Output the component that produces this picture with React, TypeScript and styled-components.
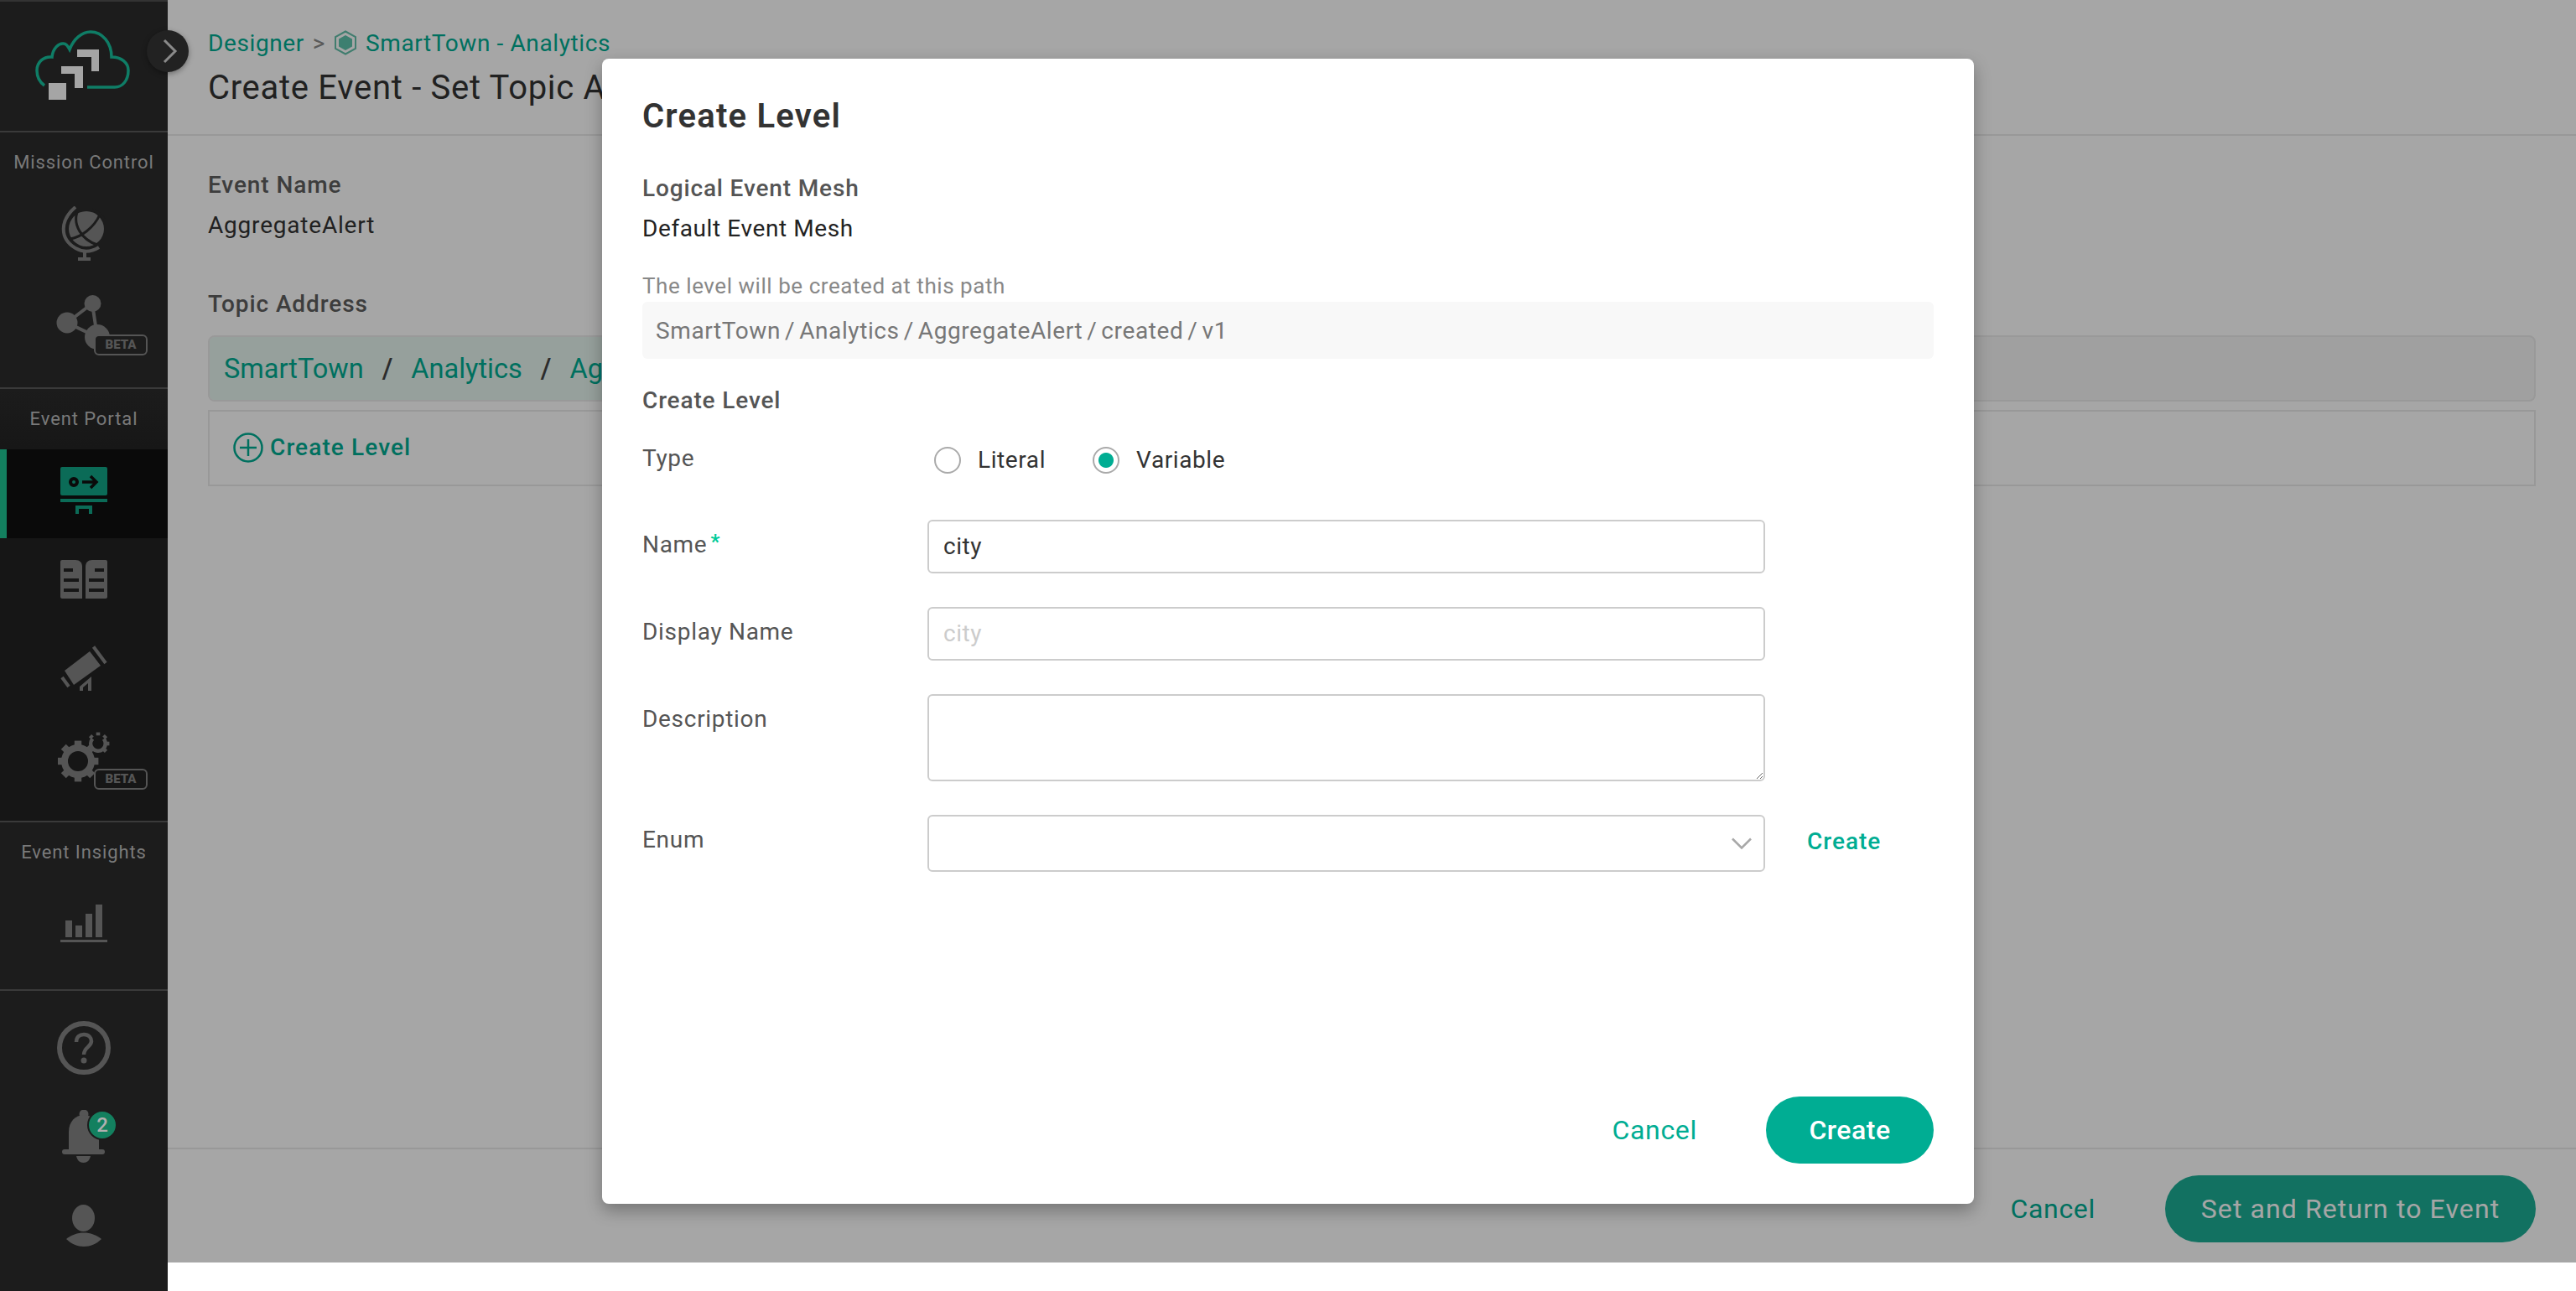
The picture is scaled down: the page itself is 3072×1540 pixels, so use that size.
import React from "react";
import styled, { createGlobalStyle } from "styled-components";

const FONT = `Roboto, "Liberation Sans", sans-serif`;

const GlobalStyle = createGlobalStyle`
  html, body {
    margin: 0;
    padding: 0;
    background: #fff;
    font-family: ${FONT};
  }
  * { box-sizing: border-box; }
`;

function Gear(props: { cx: number; cy: number; r: number; teeth: number[]; ring: number; open?: boolean }) {
  const { cx, cy, r, teeth, ring, open } = props;
  const toothW = r * 0.42;
  const mid = r - ring / 2;
  const circ = 2 * Math.PI * mid;
  return (
    <g>
      <circle
        cx={cx}
        cy={cy}
        r={mid}
        fill="none"
        stroke="#555"
        strokeWidth={ring}
        strokeDasharray={open ? `${circ * 0.72} ${circ}` : undefined}
        transform={open ? `rotate(-40 ${cx} ${cy})` : undefined}
      />
      {teeth.map((a) => (
        <rect
          key={a}
          x={cx - toothW / 2}
          y={cy - r - r * 0.22}
          width={toothW}
          height={r * 0.34}
          fill="#555"
          transform={`rotate(${a} ${cx} ${cy})`}
        />
      ))}
    </g>
  );
}

function Logo() {
  return (
    <svg width="120" height="90" viewBox="40 38 120 90">
      <path
        d="M53 106C46 101 44 95 44 88C44 78 52 71 62 72C63 62 70 55 76 56C79 56 81 59 83 63C88 50 98 42 108 42C122 42 133 55 133 72C145 72 153 79 153 88C153 100 146 108 137 108H104"
        fill="none"
        stroke="#0f7d66"
        strokeWidth="3.5"
      />
      <rect x="58" y="103" width="21" height="20" fill="#a5a5a5" />
      <path d="M73 83H99V109H89V92H73Z" fill="#a5a5a5" />
      <path d="M92 63H118V89H109V72H92Z" fill="#a5a5a5" />
    </svg>
  );
}

function GlobeIcon() {
  return (
    <svg width="56" height="66" viewBox="72 246 56 66">
      <circle cx="103" cy="273" r="21" fill="#555" />
      <path d="M92 253C87 268 97 286 116 292" fill="none" stroke="#1c1c1c" strokeWidth="3" />
      <path d="M84 285C96 283 112 272 119 256" fill="none" stroke="#1c1c1c" strokeWidth="3" />
      <path d="M110 250C116 252 120 255 124 261" fill="none" stroke="#1c1c1c" strokeWidth="3" />
      <path d="M90 247C72 262 70 284 90 296C100 302 110 300 118 295" fill="none" stroke="#555" strokeWidth="4" />
      <path d="M101 298V308M93 309H108" fill="none" stroke="#555" strokeWidth="4" />
    </svg>
  );
}

function GraphIcon() {
  return (
    <svg width="72" height="70" viewBox="64 350 72 70">
      <path d="M110 362L80 385L116 402L110 362" fill="none" stroke="#555" strokeWidth="4" />
      <circle cx="110.5" cy="362" r="10" fill="#555" />
      <circle cx="80" cy="385" r="12.5" fill="#555" />
      <circle cx="116" cy="402" r="15" fill="#555" />
    </svg>
  );
}

function DesignerIcon() {
  return (
    <svg width="56" height="56" viewBox="72 556 56 56">
      <rect x="72" y="556" width="56" height="34" rx="2" fill="#0b6b57" />
      <circle cx="88" cy="574" r="4" fill="none" stroke="#0a0a0a" strokeWidth="4" />
      <path d="M98 574H114M108 567L115 574L108 581" fill="none" stroke="#0a0a0a" strokeWidth="3.5" />
      <rect x="72" y="594" width="56" height="4" fill="#0b6b57" />
      <path d="M92 612V604H108V612" fill="none" stroke="#0b6b57" strokeWidth="4" />
    </svg>
  );
}

function BookIcon() {
  return (
    <svg width="56" height="46" viewBox="72 668 56 46">
      <path d="M72 670A2 2 0 0 1 74 668H90C95 668 98 671 98 676V714H74A2 2 0 0 1 72 712Z" fill="#555" />
      <path d="M128 670A2 2 0 0 0 126 668H110C105 668 102 671 102 676V714H126A2 2 0 0 0 128 712Z" fill="#555" />
      <path d="M76 680H87M76 692H94M76 704H94M113 680H124M106 692H124M106 704H124" stroke="#161616" strokeWidth="4" />
    </svg>
  );
}

function TelescopeIcon() {
  return (
    <svg width="56" height="54" viewBox="72 768 56 54">
      <path d="M77 798L107 775L120 792L88 815Z" fill="#555" />
      <path d="M111.500 769.500L126 789M74 806L82 817" stroke="#555" strokeWidth="4" />
      <path d="M95 822V817L109 805V822H105V813L99 818V822Z" fill="#555" />
    </svg>
  );
}

function GearsIcon() {
  return (
    <svg width="62" height="62" viewBox="69 872 62 62">
      <Gear cx={93} cy={908} r={20} ring={8} teeth={[0, 45, 90, 135, 180, 225, 270, 315]} />
      <Gear cx={117} cy={887} r={11} ring={4.500} open teeth={[-45, 0, 45, 90, 135]} />
    </svg>
  );
}

function ChartIcon() {
  return (
    <svg width="56" height="46" viewBox="72 1081 56 46">
      <path d="M78 1100H86V1120H78ZM90 1106H98V1120H90ZM102 1092H110V1120H102ZM114 1081H122V1120H114ZM72 1123H128V1126H72Z" fill="#555" />
    </svg>
  );
}

function HelpIcon() {
  return (
    <svg width="64" height="64" viewBox="0 0 64 64">
      <circle cx="32" cy="32" r="29" fill="none" stroke="#555" strokeWidth="6" />
      <path d="M23 25C23 19 27 16 32 16C38 16 41 20 41 24C41 31 32 31 32 40" fill="none" stroke="#555" strokeWidth="4.500" />
      <circle cx="32" cy="47" r="3.500" fill="#555" />
    </svg>
  );
}

function BellIcon() {
  return (
    <svg width="52" height="64" viewBox="73 1324 52 64">
      <circle cx="99" cy="1329" r="5.500" fill="#555" />
      <path d="M81 1372V1350C81 1338 89 1330 99 1330C109 1330 117 1338 117 1350V1372Z" fill="#555" />
      <rect x="73" y="1371" width="51" height="6" rx="3" fill="#555" />
      <path d="M90 1379H107C106 1384 103 1387 98.500 1387C94 1387 91 1384 90 1379Z" fill="#555" />
    </svg>
  );
}

function UserIcon() {
  return (
    <svg width="42" height="50" viewBox="79 1437 42 50">
      <ellipse cx="99.500" cy="1453" rx="13.500" ry="16" fill="#555" />
      <path d="M79 1478C91 1468 109 1468 121 1478C109 1490 91 1490 79 1478Z" fill="#555" />
    </svg>
  );
}

function PlusIcon() {
  return (
    <svg width="36" height="36" viewBox="0 0 36 36">
      <circle cx="18" cy="18" r="16.500" fill="none" stroke="#00ad93" strokeWidth="2.500" />
      <path d="M18 8V28M8 18H28" stroke="#00ad93" strokeWidth="2.500" />
    </svg>
  );
}

export default function App() {
  return (
    <Shell>
      <GlobalStyle />
      <Sidebar>
        <LogoBox>
          <Logo />
        </LogoBox>
        <Section>
          <SectionTitle>Mission Control</SectionTitle>
          <NavItem>
            <GlobeIcon />
          </NavItem>
          <NavItem>
            <GraphIcon />
            <Beta $top={63} $bg="#1c1c1c">BETA</Beta>
          </NavItem>
        </Section>
        <Section $dark>
          <SectionTitle>Event Portal</SectionTitle>
          <NavItem $active>
            <DesignerIcon />
          </NavItem>
          <NavItem>
            <BookIcon />
          </NavItem>
          <NavItem>
            <TelescopeIcon />
          </NavItem>
          <NavItem>
            <GearsIcon />
            <Beta $top={63} $bg="#161616">BETA</Beta>
          </NavItem>
        </Section>
        <Section>
          <SectionTitle>Event Insights</SectionTitle>
          <NavItem>
            <ChartIcon />
          </NavItem>
        </Section>
        <BottomSection>
          <BottomItem>
            <HelpIcon />
          </BottomItem>
          <BottomItem>
            <BellIcon />
            <Count>2</Count>
          </BottomItem>
          <BottomItem>
            <UserIcon />
          </BottomItem>
        </BottomSection>
        <Collapse>
          <svg width="18" height="30" viewBox="0 0 18 30">
            <path d="M2 2L15 15L2 28" fill="none" stroke="#8a8a8a" strokeWidth="3" />
          </svg>
        </Collapse>
      </Sidebar>

      <Main>
        <Header>
          <Breadcrumb>
            <a>Designer</a>
            <Crumb>&gt;</Crumb>
            <svg width="28" height="30" viewBox="0 0 28 30">
              <path d="M14 1.500L26 8V22L14 28.500L2 22V8Z" fill="none" stroke="#63c0aa" strokeWidth="2" />
              <path d="M14 6L22 10.500V19.500L14 24L6 19.500V10.500Z" fill="#5fc4ad" />
            </svg>
            <a>SmartTown - Analytics</a>
          </Breadcrumb>
          <PageTitle>Create Event - Set Topic Address</PageTitle>
        </Header>
        <Content>
          <FieldTitle>Event Name</FieldTitle>
          <FieldValue>AggregateAlert</FieldValue>
          <TopicTitle>Topic Address</TopicTitle>
          <TopicBar>
            <TopicChips>
              <span>SmartTown</span>
              <i>/</i>
              <span>Analytics</span>
              <i>/</i>
              <span>AggregateAlert</span>
            </TopicChips>
          </TopicBar>
          <LevelBox>
            <PlusIcon />
            <span>Create Level</span>
          </LevelBox>
        </Content>
        <PageFooter>
          <PageCancel>Cancel</PageCancel>
          <PageButton>Set and Return to Event</PageButton>
        </PageFooter>
      </Main>

      <Scrim>
        <Modal>
          <ModalTitle>Create Level</ModalTitle>
          <BoldLabel>Logical Event Mesh</BoldLabel>
          <PlainValue>Default Event Mesh</PlainValue>
          <Hint>The level will be created at this path</Hint>
          <PathBox>
            SmartTown<b>/</b>Analytics<b>/</b>AggregateAlert<b>/</b>created<b>/</b>v1
          </PathBox>
          <SubTitle>Create Level</SubTitle>
          <FormGrid>
            <RowLabel>Type</RowLabel>
            <RadioGroup>
              <RadioOption>
                <Radio />
                Literal
              </RadioOption>
              <RadioOption>
                <Radio $checked />
                Variable
              </RadioOption>
            </RadioGroup>
            <span />

            <RowLabel>
              Name<Star>*</Star>
            </RowLabel>
            <TextInput value="city" readOnly />
            <span />

            <RowLabel>Display Name</RowLabel>
            <TextInput placeholder="city" readOnly />
            <span />

            <RowLabel>Description</RowLabel>
            <TextArea readOnly />
            <span />

            <RowLabel>Enum</RowLabel>
            <SelectBox>
              <svg width="24" height="14" viewBox="0 0 24 14">
                <path d="M1 1.500L12 12.500L23 1.500" fill="none" stroke="#a8a8a8" strokeWidth="2.500" />
              </svg>
            </SelectBox>
            <InlineLink>Create</InlineLink>
          </FormGrid>
          <ModalFooter>
            <ModalCancel>Cancel</ModalCancel>
            <ModalButton>Create</ModalButton>
          </ModalFooter>
        </Modal>
      </Scrim>
    </Shell>
  );
}

const Shell = styled.div`
  position: relative;
  display: flex;
  width: 3072px;
  height: 100vh;
  overflow: hidden;
`;

const Sidebar = styled.nav`
  position: relative;
  z-index: 2;
  flex: 0 0 200px;
  display: flex;
  flex-direction: column;
  background: #1c1c1c;
  border-top: 2px solid #333;
`;

const LogoBox = styled.div`
  height: 156px;
  flex: 0 0 156px;
  display: flex;
  align-items: center;
  justify-content: center;
  border-bottom: 2px solid #3a3a3a;
`;

const Section = styled.section<{ $dark?: boolean }>`
  display: flex;
  flex-direction: column;
  flex: ${(p) => (p.$dark ? "0 0 517px" : "0 0 auto")};
  min-height: 201px;
  padding-bottom: 20px;
  border-bottom: 2px solid #3a3a3a;
  background: ${(p) => (p.$dark ? "linear-gradient(#1c1c1c, #161616 16%)" : "#1c1c1c")};
`;

const SectionTitle = styled.div`
  height: 72px;
  flex: 0 0 72px;
  padding-top: 21px;
  line-height: 30px;
  font-size: 22px;
  letter-spacing: 0.9px;
  text-align: center;
  color: #7a7a7a;
`;

const NavItem = styled.div<{ $active?: boolean }>`
  position: relative;
  height: 106px;
  flex: 0 0 106px;
  display: flex;
  align-items: center;
  justify-content: center;
  padding-bottom: 8px;
  background: ${(p) => (p.$active ? "#0a0a0a" : "transparent")};
  border-left: ${(p) => (p.$active ? "8px solid #13805f" : "0")};
  padding-right: ${(p) => (p.$active ? "8px" : "0")};
`;

const BottomItem = styled(NavItem)`
  padding-bottom: 0;
`;

const Beta = styled.span<{ $top: number; $bg: string }>`
  position: absolute;
  left: 112px;
  top: ${(p) => p.$top}px;
  width: 64px;
  height: 25px;
  border: 2.5px solid #555;
  border-radius: 6px;
  background: ${(p) => p.$bg};
  color: #555;
  font-size: 15px;
  font-weight: 900;
  line-height: 20px;
  text-align: center;
`;

const Count = styled.span`
  position: absolute;
  left: 104px;
  top: 21px;
  width: 36px;
  height: 36px;
  border: 2px solid #1c1c1c;
  border-radius: 50%;
  background: #13805f;
  color: #b0b0b0;
  font-size: 24px;
  font-weight: 500;
  line-height: 32px;
  text-align: center;
`;

const BottomSection = styled.section`
  flex: 1;
  padding-top: 15px;
  display: flex;
  flex-direction: column;
`;

const Collapse = styled.div`
  position: absolute;
  left: 175px;
  top: 34px;
  width: 50px;
  height: 50px;
  border-radius: 50%;
  background: #222;
  box-shadow: 0 2px 6px rgba(0, 0, 0, 0.35);
  display: flex;
  align-items: center;
  justify-content: center;
  padding-left: 6px;
`;

const Main = styled.main`
  flex: 1;
  height: calc(100vh - 34px);
  display: flex;
  flex-direction: column;
  background: #fff;
`;

const Header = styled.header`
  height: 162px;
  flex: 0 0 162px;
  padding: 31px 48px 0;
  border-bottom: 2px solid #eaeaea;
`;

const Breadcrumb = styled.div`
  display: flex;
  align-items: center;
  height: 40px;
  font-size: 28px;
  color: #00ad93;
  letter-spacing: 0.6px;

  svg {
    margin: 0 10px 0 10px;
  }
`;

const Crumb = styled.span`
  color: #8a8a8a;
  margin-left: 10px;
`;

const PageTitle = styled.h1`
  margin: 6px 0 0;
  height: 56px;
  line-height: 56px;
  font-size: 40px;
  font-weight: 400;
  letter-spacing: 0.7px;
  color: #333;
  white-space: nowrap;
`;

const Content = styled.div`
  flex: 1;
  padding: 39px 48px 0;
`;

const FieldTitle = styled.div`
  height: 40px;
  line-height: 40px;
  font-size: 28px;
  font-weight: 500;
  letter-spacing: 0.9px;
  color: #5e5e5e;
`;

const FieldValue = styled.div`
  height: 40px;
  margin-top: 8px;
  line-height: 40px;
  font-size: 28px;
  letter-spacing: 0.8px;
  color: #333;
`;

const TopicTitle = styled(FieldTitle)`
  margin-top: 54px;
`;

const TopicBar = styled.div`
  margin-top: 17px;
  height: 79px;
  display: flex;
  background: #f6f6f6;
  border: 2px solid #ebebeb;
  border-radius: 8px;
  overflow: hidden;
`;

const TopicChips = styled.div`
  flex: 0 0 1100px;
  padding: 0 17px;
  display: flex;
  align-items: center;
  gap: 22px;
  background: #e6f6f0;
  font-size: 32.5px;
  color: #00ad93;

  i {
    font-style: normal;
    font-weight: 500;
    color: #444;
  }
`;

const LevelBox = styled.div`
  margin-top: 10px;
  height: 91px;
  padding: 0 0 2px 28px;
  display: flex;
  align-items: center;
  gap: 8px;
  border: 2px solid #eaeaea;
  font-size: 28px;
  font-weight: 500;
  letter-spacing: 1.1px;
  color: #00ad93;
`;

const PageFooter = styled.footer`
  flex: 0 0 137px;
  display: flex;
  align-items: flex-start;
  justify-content: flex-end;
  padding: 31px 48px 0;
  border-top: 2px solid #eaeaea;
`;

const PageCancel = styled.span`
  margin-right: 83px;
  line-height: 80px;
  font-size: 32px;
  letter-spacing: 0.7px;
  color: #00ad93;
`;

const PageButton = styled.span`
  height: 80px;
  width: 442px;
  border-radius: 40px;
  background: #1cae96;
  color: #fff;
  font-size: 32px;
  letter-spacing: 1.1px;
  line-height: 80px;
  text-align: center;
`;

const Scrim = styled.div`
  position: absolute;
  z-index: 1;
  left: 0;
  top: 0;
  width: 100%;
  height: calc(100vh - 34px);
  display: flex;
  align-items: center;
  justify-content: center;
  background: rgba(0, 0, 0, 0.35);
`;

const Modal = styled.div`
  width: 1636px;
  height: 1366px;
  padding: 45px 48px 48px;
  display: flex;
  flex-direction: column;
  background: #fff;
  border-radius: 8px;
  box-shadow: 0 8px 20px rgba(0, 0, 0, 0.3);
`;

const ModalTitle = styled.h2`
  margin: 0;
  height: 48px;
  line-height: 48px;
  font-size: 40px;
  font-weight: 600;
  letter-spacing: 1.2px;
  color: #333;
`;

const BoldLabel = styled.div`
  margin-top: 42px;
  height: 40px;
  line-height: 40px;
  font-size: 28px;
  font-weight: 500;
  letter-spacing: 0.85px;
  color: #555;
`;

const PlainValue = styled.div`
  margin-top: 8px;
  height: 40px;
  line-height: 40px;
  font-size: 28px;
  letter-spacing: 0.6px;
  color: #222;
`;

const Hint = styled.div`
  margin-top: 30px;
  height: 36px;
  line-height: 36px;
  font-size: 26px;
  letter-spacing: 0.55px;
  color: #888;
`;

const PathBox = styled.div`
  margin-top: 1px;
  height: 68px;
  padding-left: 16px;
  display: flex;
  align-items: center;
  background: #f8f8f8;
  border-radius: 6px;
  font-size: 28px;
  letter-spacing: 0.6px;
  color: #777;

  b {
    font-weight: 400;
    margin: 0 5px;
  }
`;

const SubTitle = styled(BoldLabel)`
  margin-top: 30px;
`;

const FormGrid = styled.div`
  margin-top: 19px;
  display: grid;
  grid-template-columns: 340px 999px 1fr;
  row-gap: 40px;
  align-items: start;
`;

const RowLabel = styled.div`
  height: 60px;
  line-height: 60px;
  font-size: 28px;
  letter-spacing: 0.7px;
  color: #555;
`;

const Star = styled.span`
  display: inline-block;
  height: 0;
  line-height: 0;
  margin-left: 4px;
  color: #00cc99;
  font-size: 24px;
  font-weight: 700;
  transform: translateY(-5px);
`;

const RadioGroup = styled.div`
  height: 63px;
  padding-left: 8px;
  display: flex;
  align-items: center;
  gap: 56px;
`;

const RadioOption = styled.label`
  display: flex;
  align-items: center;
  gap: 20px;
  font-size: 28px;
  letter-spacing: 0.6px;
  color: #333;
`;

const Radio = styled.span<{ $checked?: boolean }>`
  width: 32px;
  height: 32px;
  border: 2px solid #aaa;
  border-radius: 50%;
  background: ${(p) => (p.$checked ? "radial-gradient(circle, #00ad93 0 8.500px, #fff 9.500px)" : "#fff")};
`;

const TextInput = styled.input`
  width: 100%;
  height: 64px;
  padding: 0 17px 2px;
  border: 2px solid #ccc;
  border-radius: 6px;
  outline: none;
  font-family: ${FONT};
  font-size: 28px;
  letter-spacing: 0.5px;
  color: #333;

  &::placeholder {
    color: #ccc;
  }
`;

const TextArea = styled.textarea`
  display: block;
  width: 100%;
  height: 104px;
  border: 2px solid #ccc;
  border-radius: 6px;
  outline: none;
`;

const SelectBox = styled.div`
  height: 68px;
  padding-right: 14px;
  display: flex;
  align-items: center;
  justify-content: flex-end;
  border: 2px solid #ccc;
  border-radius: 6px;
`;

const InlineLink = styled.a`
  margin-left: 50px;
  line-height: 64px;
  font-size: 28px;
  font-weight: 500;
  letter-spacing: 1px;
  color: #00ad93;
`;

const ModalFooter = styled.div`
  margin-top: auto;
  display: flex;
  justify-content: flex-end;
  align-items: center;
`;

const ModalCancel = styled.span`
  margin-right: 82px;
  font-size: 32px;
  letter-spacing: 0.7px;
  color: #00ad93;
`;

const ModalButton = styled.span`
  width: 200px;
  height: 80px;
  border-radius: 40px;
  background: #00ad93;
  color: #fff;
  font-size: 32px;
  font-weight: 500;
  letter-spacing: 0.5px;
  line-height: 80px;
  text-align: center;
`;
